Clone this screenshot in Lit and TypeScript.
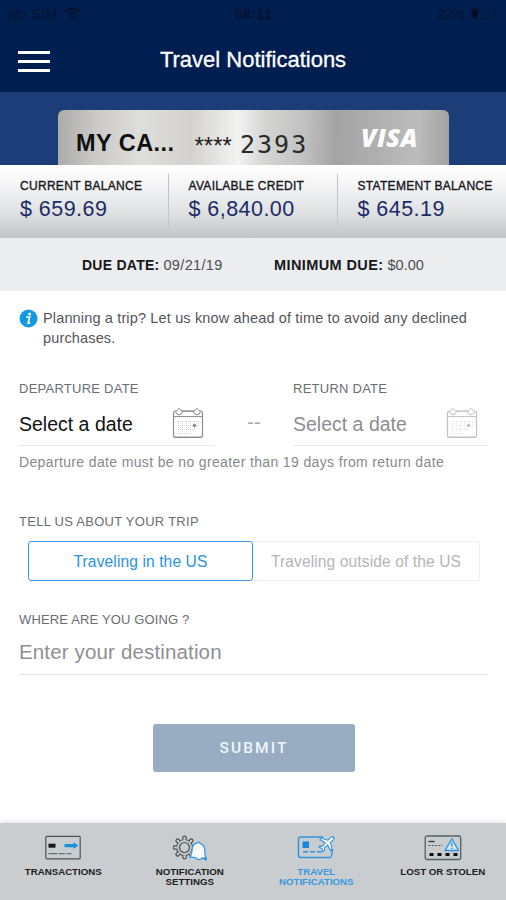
import { LitElement, html, css, svg } from "lit";
import { customElement, property } from "lit/decorators.js";
import { classMap } from "lit/directives/class-map.js";

const wifi = html`<svg width="16" height="13" viewBox="0 0 16 13" fill="none" stroke="currentColor" stroke-width="2">
  <path d="M1 4.6a10 10 0 0 1 14 0M3.6 7.4a6.3 6.3 0 0 1 8.8 0" />
  <path d="M8 12.4 5.4 9.6a3.8 3.8 0 0 1 5.2 0Z" fill="currentColor" stroke="none" />
</svg>`;

const battery = html`<svg width="29" height="13" viewBox="0 0 29 13">
  <rect x="1" y="1" width="24" height="11" rx="2" fill="none" stroke="#03163c" stroke-width="1" />
  <rect x="2.5" y="2.5" width="5" height="8" fill="#020a1c" />
  <path d="M26.5 4.5v4" stroke="#03163c" stroke-width="1.6" />
</svg>`;

const info = html`<svg width="19" height="19" viewBox="0 0 19 19">
  <circle cx="9.5" cy="9.5" r="9" fill="#1199e6" />
  <circle cx="10.6" cy="4.9" r="1.5" fill="#fff" />
  <path d="M7.4 8.1h3.2L9.2 14h1.9" fill="none" stroke="#fff" stroke-width="1.8" />
</svg>`;

const calendar = html`<svg width="32" height="32" viewBox="0 0 32 32" fill="none" stroke="currentColor">
  <rect x="1.5" y="4" width="29" height="26.5" rx="1.8" stroke-width="1.2" />
  <path d="M2 9.6h28M9.5 4.2h13" stroke-width="1" />
  <path d="M2 29.6h28" stroke-width="1" opacity=".5" />
  <path d="M4 4.3 7 1.2l3 3.1v2.2l-3 1.400-3-1.400ZM22 4.3l3-3.1 3 3.1v2.200l-3 1.400-3-1.400Z" fill="#fff" stroke-width="1" />
  <path d="M6 14.5h21M6 18.5h21M6 22.5h16M6 26.5h12M6.5 14v13M10.5 14v13M14.5 14v13M18.5 14v13M22.5 14v9M26.5 14v5" stroke-width=".7" stroke-dasharray="1 1" opacity=".5" />
  <circle cx="22.500" cy="18.500" r="1.700" fill="currentColor" stroke="none" />
</svg>`;

const teeth = [0, 45, 90, 135, 180, 225, 270, 315];

const navIcons = {
  transactions: html`<svg width="36" height="25" viewBox="0 0 36 25">
    <rect x=".8" y="1.3" width="34.4" height="22.5" rx="1" fill="none" stroke="#4d5255" stroke-width="1.2" />
    <rect x="3.5" y="8.7" width="7" height="4" fill="#15181a" />
    <path d="M19.500 9h9V7.200l4.800 3.400-4.800 3.400V12.300h-9Z" fill="#1593dc" />
    <path d="M3.500 18.700h9m1.500 0h6m1.500 0h5" stroke="#6a6f72" stroke-width="1.300" />
  </svg>`,
  settings: html`<svg width="34" height="27" viewBox="0 0 34 27">
    <g fill="none" stroke="#4d5255" stroke-width="1.2">
      <circle cx="11.5" cy="12.5" r="5" />
      <circle cx="11.5" cy="12.5" r="8" />
      ${teeth.map((a) => svg`<path transform="rotate(${a} 11.5 12.5)" d="M9.8 4.8V2.500a1.700 1.300 0 0 1 3.400 0v2.300" fill="#c9cdd0" />`)}
    </g>
    <path d="M17 22c2-2 1.500-5 2.300-8.500.6-3.300 2.800-5.300 5.400-5.600 1-1.400 2.200-1 2.300.5 3 1.200 4.800 3.600 4.800 6.500 0 3.500.2 6.500 1.800 9-2.300-.8-3.800-.6-5.500-.1-2.200 1.500-4.200.8-4.800-.7-1.700-.6-3.700-.6-6.300-1.100Z" fill="#f5f9fc" stroke="#3b9be4" stroke-width="1.300" />
    <path d="M28.500 22.500h5v3.500Z" fill="#1e8de0" />
  </svg>`,
  travel: html`<svg width="38" height="25" viewBox="0 0 38 25">
    <path d="M26 2H3.500A2 2 0 0 0 1.500 4v16.500a2 2 0 0 0 2 2H33c1.500 0 2-3.500 2.500-8" fill="none" stroke="#2f93dc" stroke-width="1.500" />
    <rect x="5.500" y="6.500" width="6.500" height="6.500" fill="#1686d8" />
    <path d="M6 16.800h5m2 0h5m2 0h5" stroke="#2f93dc" stroke-width="1.500" />
    <path d="M36.800 2.200c-1-1-2.500-.5-3.500.6l-2.300 2.400-6.500-2-1.500 1.500 5.300 3.300-2.700 3.200-2.600-.3-1.100 1.200 3 1.500 1.300 3 1.300-1.100-.1-2.600 3.200-2.700 3 5.300 1.600-1.500-1.800-6.500 2.400-2.200c1-1 1.400-2.100.3-3.100Z" fill="#f5f9fc" stroke="#2f93dc" stroke-width="1.100" />
  </svg>`,
  lost: html`<svg width="38" height="26" viewBox="0 0 38 26">
    <rect x="1.200" y="1" width="35.500" height="23.500" rx="1.800" fill="none" stroke="#5a5f62" stroke-width="1.300" />
    <path d="M4.500 6.500h6" stroke="#33373a" stroke-width="1.300" />
    <path d="M4.500 10.500h14" stroke="#55595c" stroke-width="1.100" stroke-dasharray="2 1.300" />
    <path d="M5.500 19.500h4m4 0h4m4 0h4m4 0h4" stroke="#0e1012" stroke-width="3" />
    <path d="M27.800 3.800 34.500 15.500H21Z" fill="#d5e6f3" stroke="#2f93dc" stroke-width="1.300" stroke-linejoin="round" />
    <path d="M27.800 7.500v4M27.800 12.700v1.300" stroke="#2f93dc" stroke-width="1.400" />
  </svg>`,
};

@customElement("balance-item")
class BalanceItem extends LitElement {
  @property() label = "";
  @property() amount = "";
  static styles = css`
    :host { display: block; }
    .label { font-size: 12px; line-height: 16px; letter-spacing: 0.3px; color: #16181c; -webkit-text-stroke: 0.35px #16181c; }
    .amount { margin-top: 1px; font-size: 21.5px; line-height: 28px; letter-spacing: 0.45px; color: #1d2a68; }
  `;
  render() {
    return html`<div class="label">${this.label}</div><div class="amount">${this.amount}</div>`;
  }
}

@customElement("date-field")
class DateField extends LitElement {
  @property() label = "";
  @property({ type: Boolean }) muted = false;
  static styles = css`
    :host { display: block; }
    .label { font-size: 13px; line-height: 18px; letter-spacing: 0.25px; color: #6c6d70; }
    .row { display: flex; align-items: center; justify-content: space-between; height: 48px; padding: 0 11px 0 0; border-bottom: 1px solid #e9e9eb; box-sizing: border-box; color: #8b8d90; }
    .value { font-size: 19.5px; color: #111; padding-top: 5px; }
    .muted .value { color: #8c8d90; }
    .muted { color: #c0c1c3; padding-right: 10px; }
    svg { display: block; margin-top: 2px; }
  `;
  render() {
    return html`<div class="label">${this.label}</div>
      <div class=${classMap({ row: true, muted: this.muted })}><span class="value">Select a date</span>${calendar}</div>`;
  }
}

@customElement("app-root")
class AppRoot extends LitElement {
  static styles = css`
    :host { display: flex; flex-direction: column; width: 506px; height: 900px; overflow: hidden; background: #fff; font-family: "Liberation Sans", Arial, sans-serif; white-space: nowrap; }
    svg { display: block; flex: none; }
    .top { height: 92px; background: #011e50; }
    .status { display: grid; grid-template-columns: 1fr auto 1fr; align-items: center; height: 27px; padding: 0 7px 0 8px; font-size: 14px; color: #05112f; }
    .carrier { display: flex; align-items: center; gap: 7px; letter-spacing: 0.5px; }
    .time { font-weight: bold; letter-spacing: 0.6px; }
    .power { display: flex; align-items: center; justify-content: flex-end; gap: 5px; }
    .bar { display: grid; grid-template-columns: 50px 1fr 50px; align-items: center; height: 65px; padding: 0 18px; }
    .menu { display: flex; flex-direction: column; gap: 6px; width: 32px; padding-top: 4px; }
    .menu i { height: 3px; background: #fff; }
    .title { text-align: center; font-size: 22px; line-height: 28px; color: #fff; -webkit-text-stroke: 0.3px #fff; }
    .band { display: flex; justify-content: center; height: 55px; padding: 18px 0 0 1px; background: #1d3d79; }
    .card { display: flex; align-items: center; box-sizing: border-box; width: 391px; height: 55px; padding: 11px 0 0 18px; border-radius: 6px 6px 0 0; background: linear-gradient(91deg, #acaba9 0%, #cbcac8 10%, #dededc 21%, #d3d2cf 34%, #e2e2e0 40%, #f3f3f3 46%, #d4d4d3 53%, #c1c1c1 63%, #a3a3a3 71%, #aeaeae 80%, #bcbcbc 92%, #a2a2a2 100%); }
    .name { width: 118.5px; font-size: 23.5px; font-weight: bold; letter-spacing: 0.45px; color: #101010; }
    .stars { width: 45.5px; font-size: 24px; color: #222; padding-top: 5px; }
    .digits { width: 121px; font-family: "DejaVu Sans Mono", monospace; font-size: 25px; line-height: 30px; letter-spacing: 2px; color: #2a2a2a; padding-top: 3px; }
    .visa { font-family: "Open Sans", "Noto Sans", sans-serif; font-weight: 800; font-style: italic; font-size: 25px; letter-spacing: 0.5px; color: #fff; margin-bottom: 13px; }
    .balances { display: grid; grid-template-columns: 168px 169px 169px; height: 73px; background: linear-gradient(#fff 0%, #f6f6f7 25%, #dfe1e3 65%, #c1c5c8 100%); }
    .balances > * { padding: 13px 0 0 20px; box-sizing: border-box; }
    .balances > .divided { padding-left: 19.5px; border-left: 1px solid; border-image: linear-gradient(transparent 12%, #c0c3c5 14%, #c0c3c5 60%, #c8cbcd 85%, transparent) 1; }
    .due { display: flex; align-items: center; height: 53px; background: #ecedef; font-size: 14.5px; color: #4c4d50; box-sizing: border-box; padding-left: 82px; }
    .due b { color: #17181b; font-size: 14px; margin-right: 4px; letter-spacing: 0.25px; }
    .first { width: 192px; letter-spacing: 0.35px; }
    .due .minimum b { letter-spacing: 0; font-size: 14.500px; margin-right: 4px; letter-spacing: 0.4px; }
    main { flex: 1; padding: 0 18px 0 19px; }
    .notice { display: flex; gap: 5px; padding-top: 18px; font-size: 14.5px; line-height: 19.5px; letter-spacing: 0.15px; color: #55565a; height: 71px; }
    .dates { display: grid; grid-template-columns: 196px 78px 195px; }
    .dash { align-self: center; text-align: center; color: #a5a6a8; font-size: 20px; padding-top: 19px; }
    .hint { margin-top: 7px; font-size: 14px; line-height: 18px; letter-spacing: 0.36px; color: #88898c; }
    .heading { font-size: 13px; line-height: 18px; letter-spacing: 0.15px; color: #6c6d70; }
    .trip { margin-top: 42px; letter-spacing: 0.27px; }
    .choices { display: grid; grid-template-columns: 225px 227px; height: 40px; margin: 10px 0 30px 9px; }
    .choice { display: flex; align-items: center; justify-content: center; box-sizing: border-box; padding-top: 1px; font-size: 15.6px; letter-spacing: 0.1px; border: 1px solid #f0f0f1; border-left: 0; border-radius: 0 3px 3px 0; color: #b4b5b8; }
    .on { border: 1.5px solid #3d98e4; border-radius: 3px; color: #2a93e2; }
    .destination { height: 46px; line-height: 46px; box-sizing: border-box; font-size: 20.5px; letter-spacing: 0.15px; color: #8e8f92; border-bottom: 1px solid #e4e4e6; }
    .submit { display: flex; align-items: center; justify-content: center; width: 202px; height: 48px; margin: 49px 0 0 134px; border: 0; padding: 0; border-radius: 3px; background: #98acc2; color: #eef6fd; font: 500 15.5px Roboto, sans-serif; letter-spacing: 2.1px; }
    nav { display: grid; grid-template-columns: repeat(4, 126.5px); height: 77px; background: #c9cdd0; box-shadow: 0 -2px 5px #e6e8ea; }
    .tab { display: flex; flex-direction: column; align-items: center; padding-top: 12px; text-align: center; font-size: 9.7px; font-weight: bold; line-height: 10px; color: #1d2023; }
    .icon { height: 32px; }
    .active { color: #3a98df; }
  `;

  render() {
    const tab = (icon: unknown, lines: unknown, active = false) =>
      html`<div class=${classMap({ tab: true, active })}><div class="icon">${icon}</div><span>${lines}</span></div>`;
    return html`
      <header class="top">
        <div class="status">
          <span class="carrier">No SIM ${wifi}</span>
          <span class="time">08:11</span>
          <span class="power">22% ${battery}</span>
        </div>
        <div class="bar">
          <div class="menu"><i></i><i></i><i></i></div>
          <div class="title">Travel Notifications</div>
        </div>
      </header>
      <section class="band">
        <div class="card">
          <span class="name">MY CA...</span><span class="stars">****</span><span class="digits">2393</span><span class="visa">VISA</span>
        </div>
      </section>
      <section class="balances">
        <balance-item label="CURRENT BALANCE" amount="$ 659.69"></balance-item>
        <balance-item class="divided" label="AVAILABLE CREDIT" amount="$ 6,840.00"></balance-item>
        <balance-item class="divided" label="STATEMENT BALANCE" amount="$ 645.19"></balance-item>
      </section>
      <section class="due">
        <div class="first"><b>DUE DATE:</b>09/21/19</div>
        <div class="minimum"><b>MINIMUM DUE:</b>$0.00</div>
      </section>
      <main>
        <div class="notice">${info}<span>Planning a trip? Let us know ahead of time to avoid any declined<br />purchases.</span></div>
        <div class="dates">
          <date-field label="DEPARTURE DATE"></date-field>
          <span class="dash">--</span>
          <date-field label="RETURN DATE" muted></date-field>
        </div>
        <div class="hint">Departure date must be no greater than 19 days from return date</div>
        <div class="heading trip">TELL US ABOUT YOUR TRIP</div>
        <div class="choices"><div class="choice on">Traveling in the US</div><div class="choice">Traveling outside of the US</div></div>
        <div class="heading">WHERE ARE YOU GOING ?</div>
        <div class="destination">Enter your destination</div>
        <button class="submit">SUBMIT</button>
      </main>
      <nav>
        ${tab(navIcons.transactions, "TRANSACTIONS")}
        ${tab(navIcons.settings, html`NOTIFICATION<br />SETTINGS`)}
        ${tab(navIcons.travel, html`TRAVEL<br />NOTIFICATIONS`, true)}
        ${tab(navIcons.lost, "LOST OR STOLEN")}
      </nav>
    `;
  }
}
